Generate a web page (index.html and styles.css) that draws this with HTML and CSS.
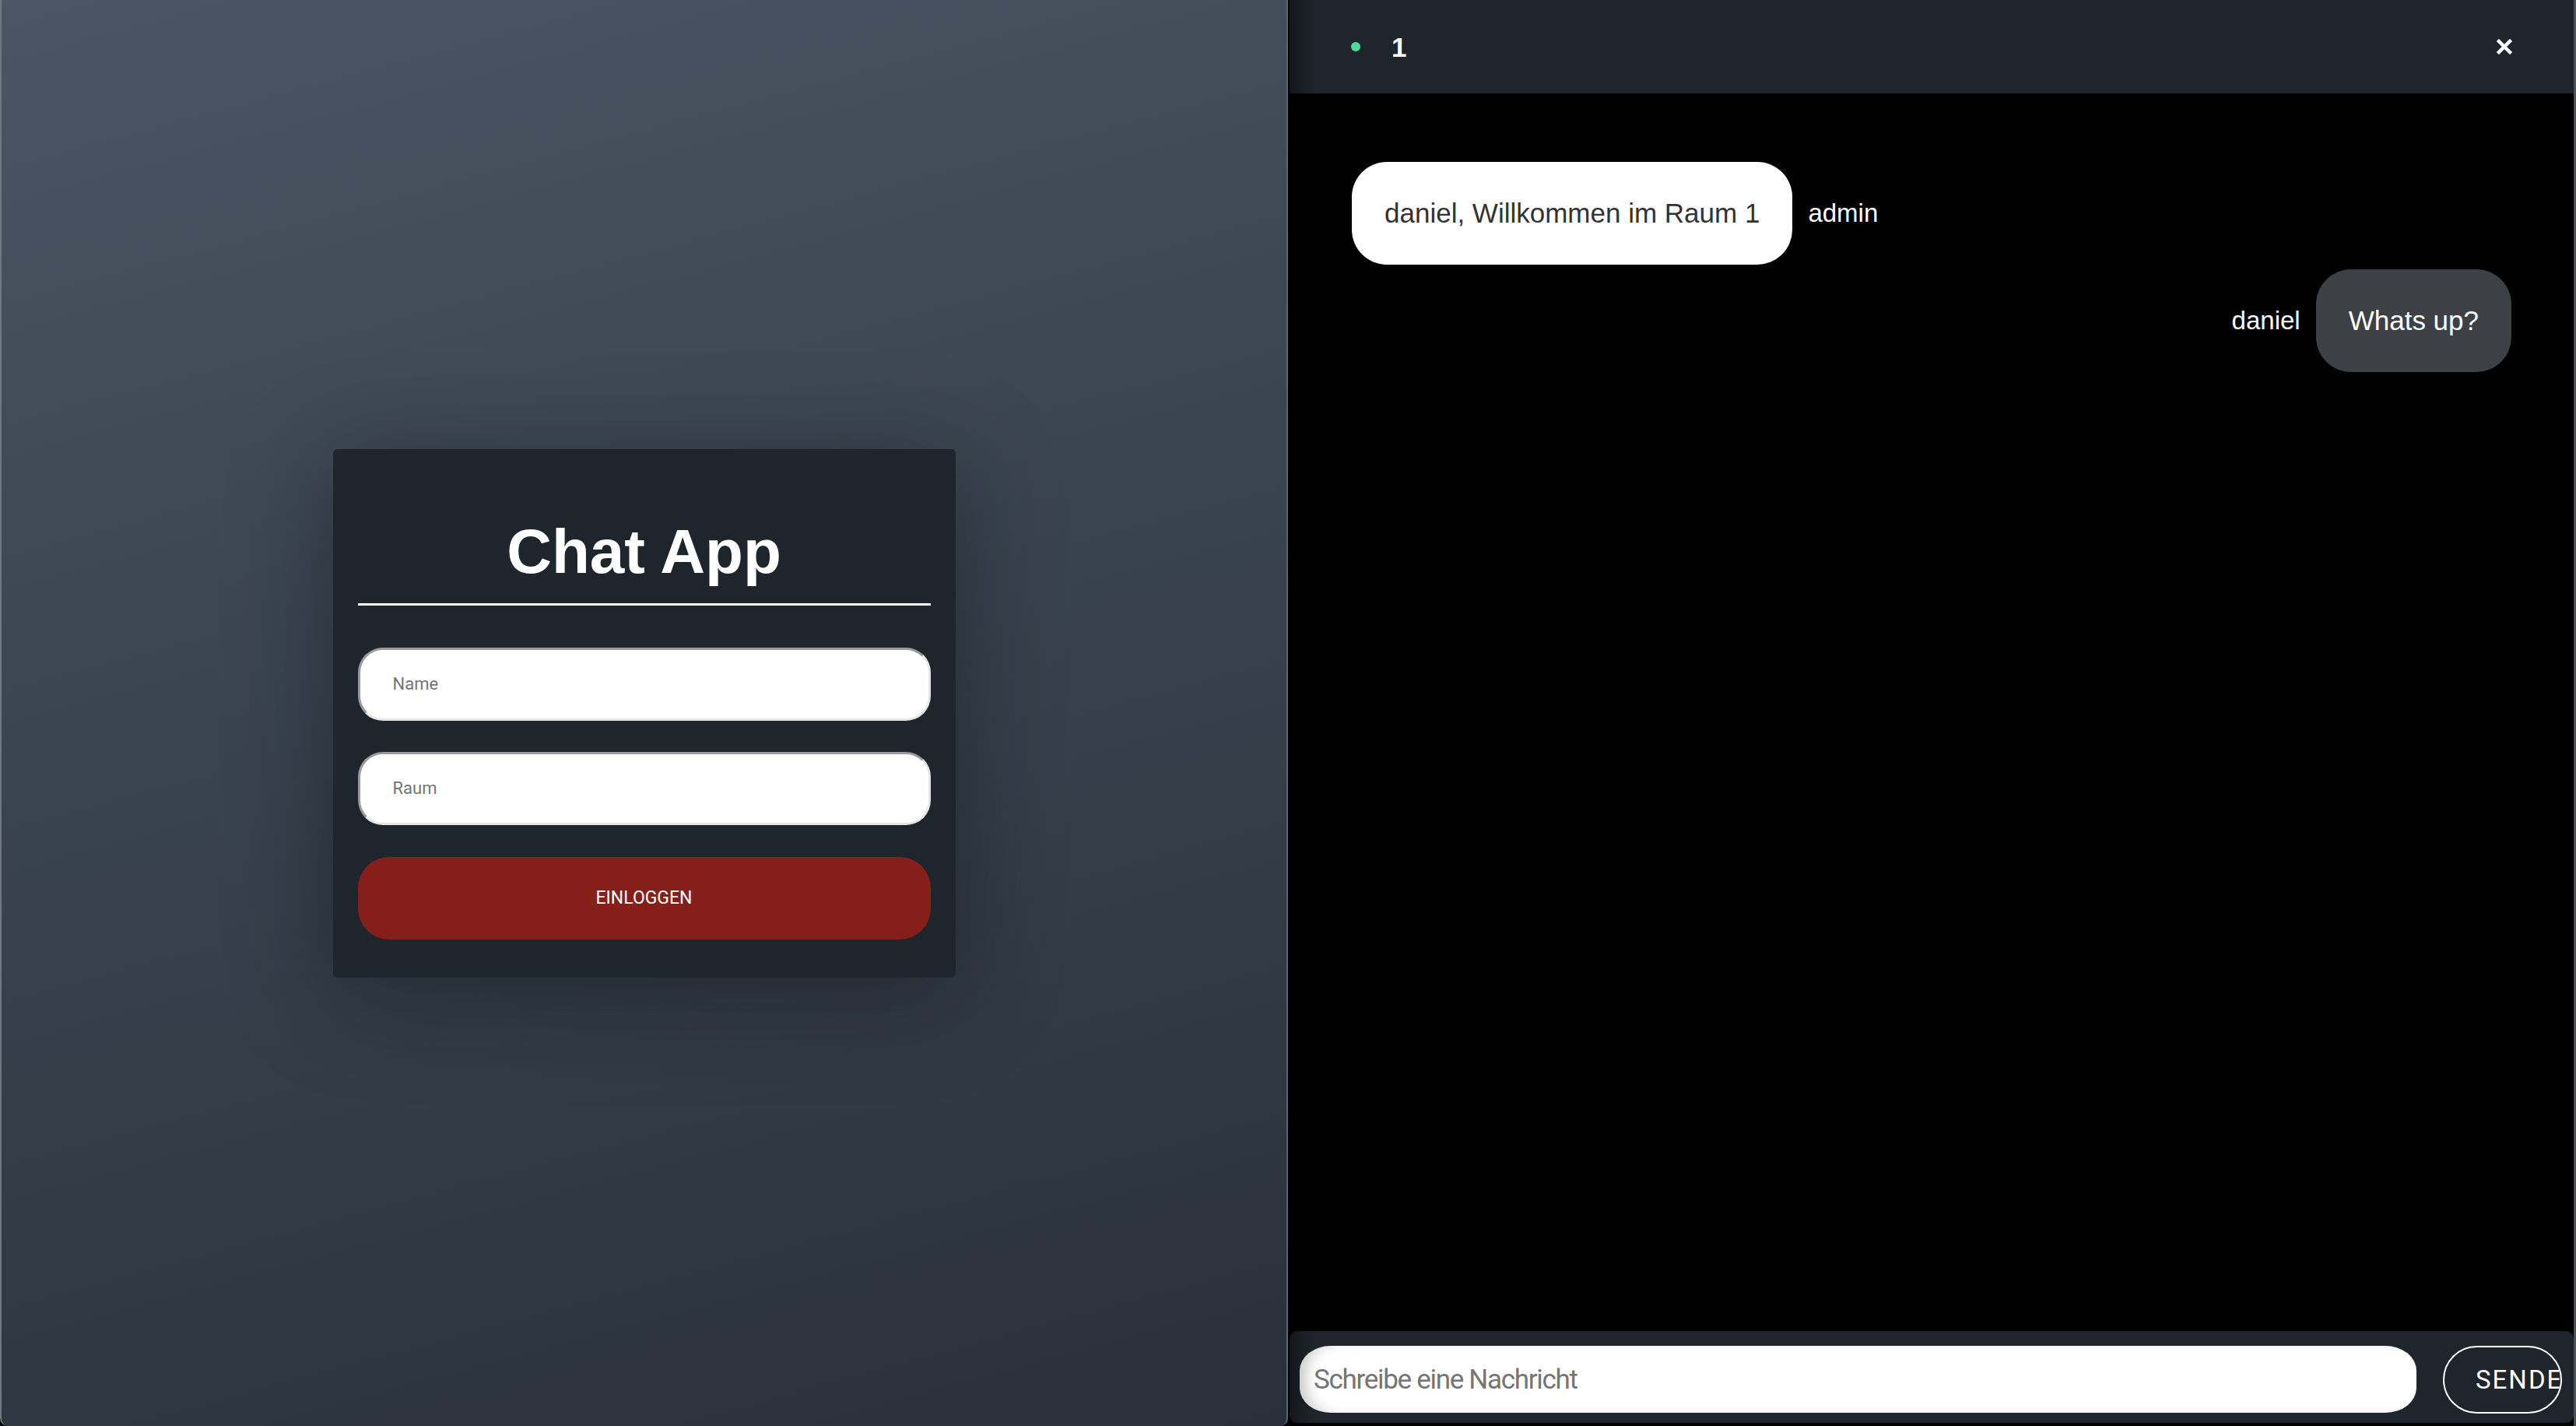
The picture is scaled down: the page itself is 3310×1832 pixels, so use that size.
FILE: index.html
```html
<!DOCTYPE html>
<html lang="de">
<head>
<meta charset="utf-8">
<title>Chat App</title>
<link rel="stylesheet" href="styles.css">
</head>
<body>
<div class="app">
  <section class="login-pane">
    <form class="login-card">
      <h1 class="login-title">Chat App</h1>
      <input class="login-input" type="text" placeholder="Name">
      <input class="login-input" type="text" placeholder="Raum">
      <button class="login-button" type="button">EINLOGGEN</button>
    </form>
  </section>
  <section class="chat-pane">
    <header class="chat-header">
      <span class="status-dot"></span>
      <span class="room-name">1</span>
      <button class="close-button" type="button" aria-label="Schließen">
        <svg width="20" height="20" viewBox="0 0 20 20"><path d="M3 3 L17 17 M17 3 L3 17" stroke="#fff" stroke-width="4.5" stroke-linecap="square" fill="none"/></svg>
      </button>
    </header>
    <main class="messages">
      <div class="message">
        <div class="bubble bubble-light">daniel, Willkommen im Raum 1</div>
        <span class="sender">admin</span>
      </div>
      <div class="message message-own">
        <span class="sender">daniel</span>
        <div class="bubble bubble-dark">Whats up?</div>
      </div>
    </main>
    <footer class="composer">
      <input class="composer-input" type="text" placeholder="Schreibe eine Nachricht">
      <button class="send-button" type="button">SENDEN</button>
    </footer>
  </section>
</div>
</body>
</html>
```
FILE: styles.css
```css
html, body {
  margin: 0;
  padding: 0;
  background: #000;
  font-family: "Liberation Sans", Arial, sans-serif;
}

.app {
  display: flex;
  width: 3310px;
  height: 1832px;
  overflow: hidden;
}

/* ---------- Login side ---------- */
.login-pane {
  box-sizing: border-box;
  flex: none;
  width: 1655px;
  height: 100%;
  display: flex;
  align-items: center;
  justify-content: center;
  background: linear-gradient(165deg, #4b5664 0%, #3a4450 45%, #29303a 100%);
  border-left: 2px solid #6e7782;
  border-right: 2px solid #5b6470;
  border-radius: 0 0 10px 10px;
}

.login-card {
  box-sizing: border-box;
  width: 800px;
  padding: 32px 32px 49px;
  display: flex;
  flex-direction: column;
  background: #1f252d;
  border-radius: 6px;
  box-shadow: 0 20px 130px rgba(12, 16, 22, 0.45);
}

.login-title {
  margin: 54px 0 0;
  padding-bottom: 20px;
  border-bottom: 3px solid #fff;
  color: #fff;
  font-size: 80px;
  line-height: 92px;
  font-weight: 700;
  text-align: center;
}

.login-input {
  box-sizing: border-box;
  height: 94px;
  margin-top: 54px;
  padding: 0 42px;
  border: 3px solid;
  border-color: #9a9a9a #e6e6e6 #e6e6e6 #9a9a9a;
  border-radius: 32px;
  background: #fff;
  font-family: Roboto, "Liberation Sans", sans-serif;
  font-size: 22px;
  color: #222;
  outline: none;
}

.login-input + .login-input {
  margin-top: 40px;
}

.login-input::placeholder {
  color: #757575;
}

.login-button {
  height: 106px;
  margin-top: 41px;
  border: none;
  border-radius: 40px;
  background: #861f19;
  color: #fff;
  font-family: Roboto, "Liberation Sans", sans-serif;
  font-size: 23px;
}

/* ---------- Chat side ---------- */
.chat-pane {
  box-sizing: border-box;
  flex: 1;
  display: flex;
  flex-direction: column;
  padding-left: 2px;
  border-right: 3px solid #4c5158;
}

.chat-header {
  flex: none;
  height: 120px;
  display: flex;
  align-items: center;
  padding: 0 79px;
  background: linear-gradient(90deg, #14171b 0, #1f252d 32px);
}

.status-dot {
  width: 12px;
  height: 12px;
  border-radius: 50%;
  background: #4fd99a;
  margin-right: 40px;
}

.room-name {
  color: #fff;
  font-size: 35px;
  font-weight: 700;
  line-height: 1;
}

.close-button {
  margin-left: auto;
  padding: 0;
  border: none;
  background: none;
  display: flex;
}

.messages {
  flex: 1;
  display: flex;
  flex-direction: column;
  gap: 6px;
  padding: 88px 80px 0;
  background: #000;
}

.message {
  display: flex;
  align-items: center;
  gap: 20px;
}

.message-own {
  justify-content: flex-end;
}

.bubble {
  padding: 46px 42px;
  border-radius: 45px;
  font-size: 35px;
  line-height: 40px;
}

.bubble-light {
  background: #fff;
  color: #333;
}

.bubble-dark {
  background: #3d4045;
  color: #fff;
}

.sender {
  color: #fff;
  font-size: 33px;
}

.composer {
  flex: none;
  height: 118px;
  margin-bottom: 4px;
  box-sizing: border-box;
  display: flex;
  align-items: flex-start;
  gap: 34px;
  padding: 19px 15px 0 13px;
  border-radius: 10px;
  background: linear-gradient(90deg, #14171b 0, #1f252d 32px);
}

.composer-input {
  box-sizing: border-box;
  flex: 1;
  height: 86px;
  padding: 0 18px;
  border: none;
  border-radius: 40px / 32px;
  background: #fff;
  box-shadow: inset 16px 0 18px -8px rgba(0, 0, 0, 0.22);
  font-family: Roboto, "Liberation Sans", sans-serif;
  font-size: 35px;
  letter-spacing: -1.3px;
  color: #222;
  outline: none;
}

.composer-input::placeholder {
  color: #757575;
}

.send-button {
  box-sizing: border-box;
  flex: none;
  width: 153px;
  height: 87px;
  padding: 0 0 0 40px;
  border: 2px solid #fff;
  border-radius: 44px;
  background: transparent;
  color: #fff;
  font-family: Roboto, "Liberation Sans", sans-serif;
  font-size: 33px;
  letter-spacing: 2px;
  text-align: left;
  white-space: nowrap;
  overflow: hidden;
}
```
